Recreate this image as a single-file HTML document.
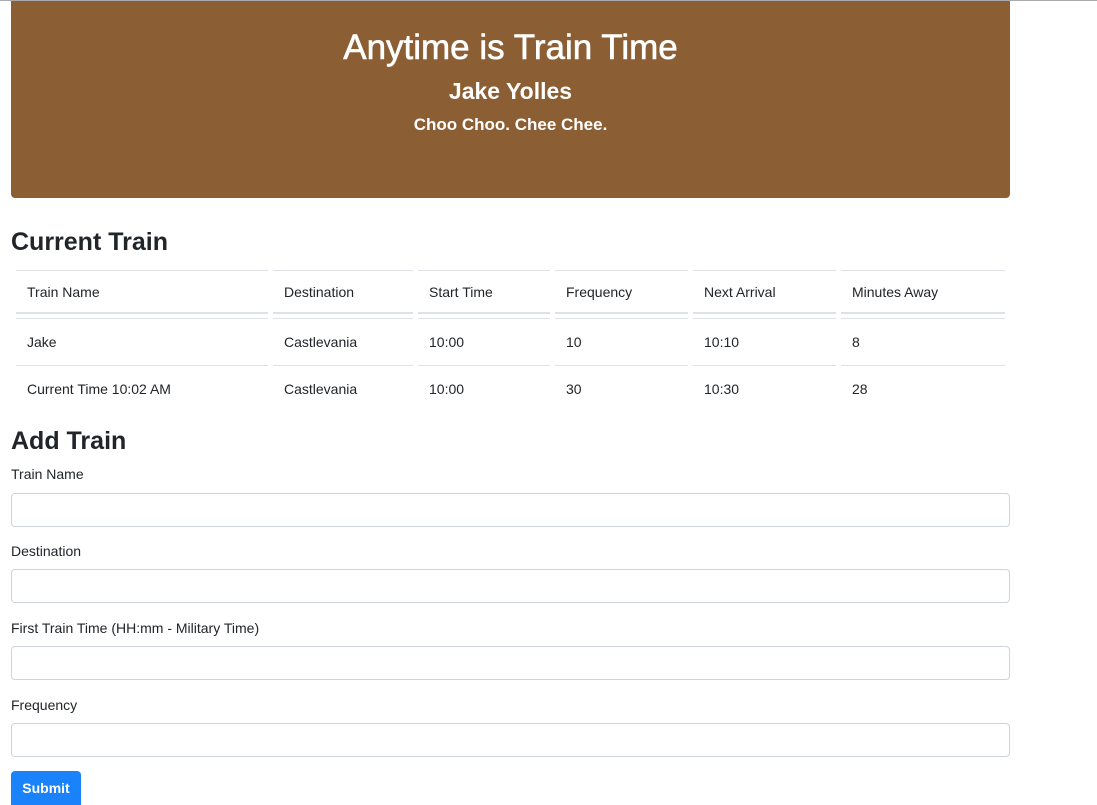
<!DOCTYPE html>
<html><head><style>
body{margin:0;width:1097px;height:805px;overflow:hidden;font-family:"Liberation Sans",sans-serif;color:#212529;background:#fff;position:relative}
.top{position:absolute;left:0;top:0;width:1097px;height:1px;background:#aaa}
.hdr{position:absolute;left:11px;top:1px;width:999px;height:197px;background:#8b5e34;border-radius:0 0 4px 4px;color:#fff;text-align:center}
.hdr div{position:absolute;left:0;right:0;font-weight:bold}
h2{position:absolute;left:11px;margin:0;font-size:25px;font-weight:bold}
table{position:absolute;left:11px;top:270px;border-collapse:separate;border-spacing:5px 0;font-size:14px}
td{border-top:1px solid #dee2e6;padding:0 11px;height:46px;vertical-align:middle}
thead td{border-bottom:2px solid #dee2e6;height:41px}
tr.gap td{height:4px;padding:0;border:none;line-height:0;font-size:0}
label{position:absolute;left:11px;font-size:14px}
.in{position:absolute;left:11px;width:997px;height:32px;border:1px solid #ced4da;border-radius:4px}
.btn{position:absolute;left:11px;top:771px;width:70px;height:34px;background:#1a82fb;color:#fff;font-weight:bold;font-size:14px;border-radius:4px 4px 0 0;text-align:center;line-height:34px}
</style></head><body>
<div class="top"></div>
<div class="hdr">
<div style="top:27px;font-size:35px;font-weight:normal;-webkit-text-stroke:.6px #fff">Anytime is Train Time</div>
<div style="top:77px;font-size:23px">Jake Yolles</div>
<div style="top:114px;font-size:17px">Choo Choo. Chee Chee.</div>
</div>
<h2 style="top:228px">Current Train</h2>
<table>
<thead><tr><td style="width:230px">Train Name</td><td style="width:118px">Destination</td><td style="width:110px">Start Time</td><td style="width:111px">Frequency</td><td style="width:121px">Next Arrival</td><td style="width:142px">Minutes Away</td></tr></thead>
<tbody>
<tr class="gap"><td></td><td></td><td></td><td></td><td></td><td></td></tr>
<tr><td>Jake</td><td>Castlevania</td><td>10:00</td><td>10</td><td>10:10</td><td>8</td></tr>
<tr><td>Current Time 10:02 AM</td><td>Castlevania</td><td>10:00</td><td>30</td><td>10:30</td><td>28</td></tr>
</tbody></table>
<h2 style="top:427px">Add Train</h2>
<label style="top:466px">Train Name</label><div class="in" style="top:493px"></div>
<label style="top:543px">Destination</label><div class="in" style="top:569px"></div>
<label style="top:620px">First Train Time (HH:mm - Military Time)</label><div class="in" style="top:646px"></div>
<label style="top:697px">Frequency</label><div class="in" style="top:723px"></div>
<div class="btn">Submit</div>
</body></html>
